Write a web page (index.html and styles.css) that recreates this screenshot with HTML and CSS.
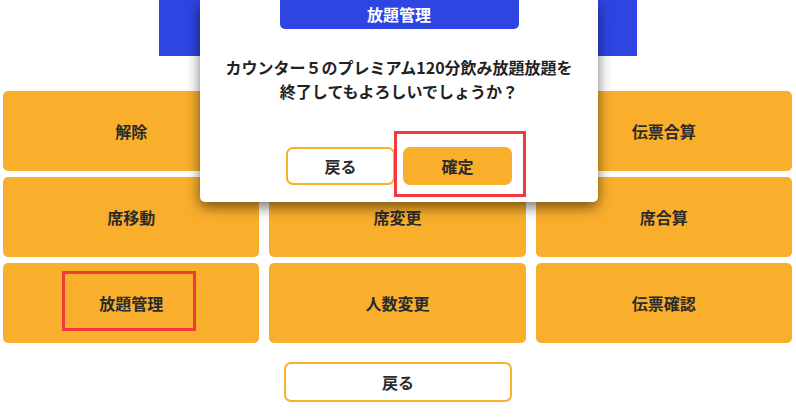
FILE: index.html
```html
<!DOCTYPE html>
<html lang="ja">
<head>
<meta charset="utf-8">
<link rel="stylesheet" href="styles.css">
</head>
<body>
<div class="page">
  <div class="header"></div>
  <div class="grid">
    <div class="tile">解除</div>
    <div class="tile">会計</div>
    <div class="tile">伝票合算</div>
    <div class="tile">席移動</div>
    <div class="tile">席変更</div>
    <div class="tile">席合算</div>
    <div class="tile">放題管理</div>
    <div class="tile">人数変更</div>
    <div class="tile">伝票確認</div>
  </div>
  <div class="footer">
    <button class="btn-outline wide">戻る</button>
  </div>
</div>

<div class="dialog">
  <div class="dialog-title">放題管理</div>
  <p class="dialog-msg">カウンター５のプレミアム120分飲み放題放題を<br>終了してもよろしいでしょうか？</p>
  <div class="dialog-actions">
    <button class="btn-outline small">戻る</button>
    <button class="btn-fill small">確定</button>
  </div>
</div>

<div class="mark mark-confirm"></div>
<div class="mark mark-tile"></div>
</body>
</html>
```

FILE: styles.css
```css
html, body {
  margin: 0;
  padding: 0;
  background: #ffffff;
  font-family: "Noto Sans CJK JP", "Noto Sans", sans-serif;
  color: #2b2b2b;
}

.page {
  width: 796px;
  height: 417px;
  overflow: hidden;
}

.header {
  height: 56px;
  margin: 0 159px;
  background: #2f45e2;
}

.grid {
  margin-top: 35px;
  padding: 0 4px 0 3px;
  display: grid;
  grid-template-columns: repeat(3, 1fr);
  grid-auto-rows: 80px;
  column-gap: 10px;
  row-gap: 6px;
}

.tile {
  background: #f9af2b;
  border-radius: 5px;
  display: flex;
  align-items: center;
  justify-content: center;
  font-size: 16px;
  font-weight: 700;
  color: #2b2b2b;
}

.footer {
  display: flex;
  justify-content: center;
  margin-top: 19px;
}

button {
  font-family: inherit;
  font-size: 16px;
  font-weight: 700;
  color: #2b2b2b;
  cursor: pointer;
  padding: 0;
}

.btn-outline {
  background: #ffffff;
  border: 2px solid #f9af2b;
  border-radius: 7px;
}

.btn-fill {
  background: #f9af2b;
  border: 2px solid #f9af2b;
  border-radius: 7px;
}

.wide {
  width: 228px;
  height: 40px;
}

.small {
  width: 109px;
  height: 38px;
}

.dialog {
  position: absolute;
  left: 200px;
  top: 0;
  width: 398px;
  height: 202px;
  background: #ffffff;
  border-radius: 0 0 5px 5px;
  box-shadow: 0 5px 14px rgba(0, 0, 0, 0.55);
  display: flex;
  flex-direction: column;
  align-items: center;
}

.dialog-title {
  width: 239px;
  height: 29px;
  background: #2f45e2;
  border-radius: 0 0 5px 5px;
  color: #ffffff;
  font-size: 16px;
  font-weight: 700;
  line-height: 29px;
  text-align: center;
}

.dialog-msg {
  margin: 26px 0 0;
  font-size: 16px;
  font-weight: 700;
  line-height: 24px;
  text-align: center;
  color: #222222;
}

.dialog-actions {
  margin-top: 44px;
  display: flex;
  gap: 8px;
}

.mark {
  position: absolute;
  border: 3px solid #f03a3d;
  box-sizing: border-box;
}

.mark-confirm {
  left: 394px;
  top: 131px;
  width: 132px;
  height: 66px;
}

.mark-tile {
  left: 62px;
  top: 271px;
  width: 134px;
  height: 60px;
}
```
